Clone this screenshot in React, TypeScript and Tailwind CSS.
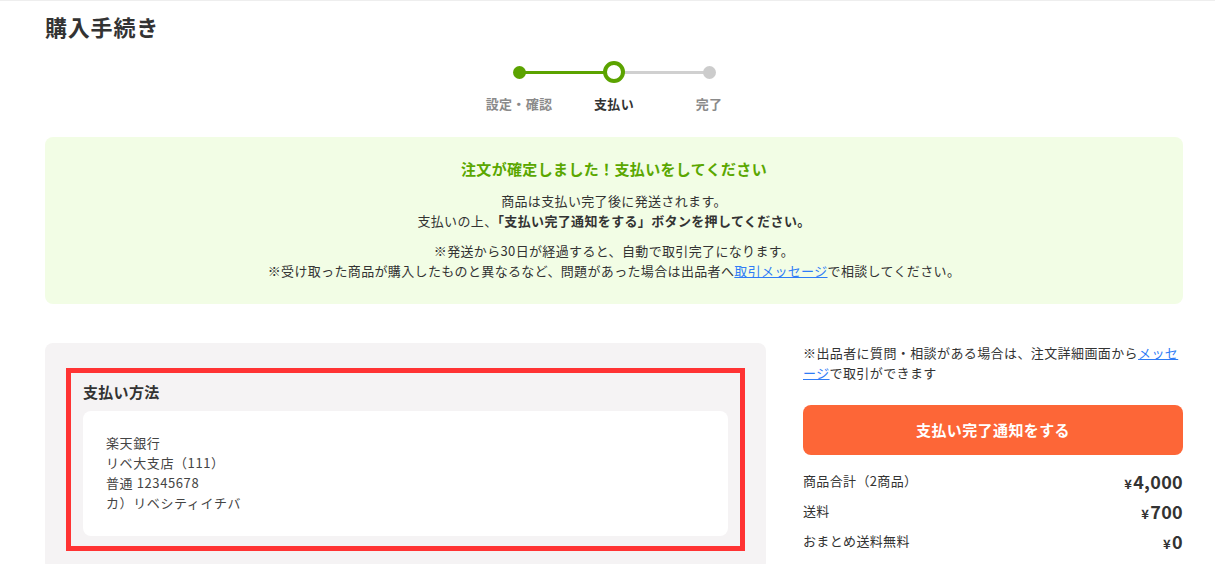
import React from 'react';

const font = { fontFamily: '"Noto Sans CJK JP", "Noto Sans", sans-serif' };

function Stepper() {
    const steps = [
        { label: '設定・確認', state: 'done' },
        { label: '支払い', state: 'current' },
        { label: '完了', state: 'todo' },
    ];
    return (
        <div className="flex flex-col items-center mt-[19px]">
            <div className="relative grid grid-cols-3 w-[285px] h-[22px]">
                {/* connecting lines */}
                <div className="absolute top-[10px] left-[47px] w-[96px] h-[3px] bg-[#5ba300]" />
                <div className="absolute top-[10px] left-[143px] w-[95px] h-[3px] bg-[#d0d0d0]" />
                {steps.map((s) => (
                    <div key={s.label} className="relative flex items-center justify-center">
                        {s.state === 'done' && <span className="w-[13px] h-[13px] rounded-full bg-[#5ba300]" />}
                        {s.state === 'current' && <span className="w-[22px] h-[22px] rounded-full border-[4px] border-[#5ba300] bg-white" />}
                        {s.state === 'todo' && <span className="w-[13px] h-[13px] rounded-full bg-[#cccccc]" />}
                    </div>
                ))}
            </div>
            <div className="grid grid-cols-3 w-[285px] mt-[11px]">
                {steps.map((s) => (
                    <div
                        key={s.label}
                        className={`text-center text-[13px] leading-[20px] font-bold whitespace-nowrap tracking-[0.3px] ${s.state === 'current' ? 'text-[#333333]' : 'text-[#8a8a8a]'}`}
                    >
                        {s.label}
                    </div>
                ))}
            </div>
        </div>
    );
}

function Row({ label, value }: { label: string; value: string }) {
    return (
        <div className="flex h-[30px] items-center justify-between">
            <span className="text-[13px] text-[#333333] tracking-[0.35px]">{label}</span>
            <span className="text-[18px] font-bold text-[#333333] tracking-[0.3px]">
                <span className="text-[13px] mr-[1px]">¥</span>
                {value}
            </span>
        </div>
    );
}

export default function App() {
    return (
        <div className="min-h-screen bg-white border-t border-[#eeeeee] text-[#333333]" style={font}>
            <div className="w-[1138px] ml-[45px]">
                <h1 className="pt-[9px] text-[22px] leading-[32px] font-bold text-[#333333] tracking-[0.8px]">購入手続き</h1>

                <Stepper />

                {/* confirmation notice */}
                <div className="mt-[23px] rounded-[8px] bg-[#f2fde5] pt-[21px] pb-[23px] text-center tracking-[0.35px]">
                    <p className="text-[15px] leading-[22px] font-bold text-[#5aa700]">
                        注文が確定しました！支払いをしてください
                    </p>
                    <div className="mt-[11px] text-[13px] leading-[20px] text-[#333333]">
                        <p>商品は支払い完了後に発送されます。</p>
                        <p>
                            支払いの上、<span className="font-bold">「支払い完了通知をする」ボタンを押してください。</span>
                        </p>
                    </div>
                    <div className="mt-[10px] text-[13px] leading-[20px] text-[#333333]">
                        <p>※発送から30日が経過すると、自動で取引完了になります。</p>
                        <p>
                            ※受け取った商品が購入したものと異なるなど、問題があった場合は出品者へ
                            <a className="text-[#2f7cf6] underline">取引メッセージ</a>で相談してください。
                        </p>
                    </div>
                </div>

                <div className="mt-[39px] flex gap-[37px] items-start">
                    {/* payment method */}
                    <div className="w-[721px] rounded-[8px] bg-[#f5f3f4] px-[21px] pt-[25px] pb-[20px]">
                        <div className="border-[5px] border-[#ff3333] px-[12px] pt-[9px] pb-[10px]">
                            <h2 className="text-[15px] leading-[20px] font-bold text-[#333333] tracking-[0.3px]">支払い方法</h2>
                            <div className="mt-[9px] rounded-[8px] bg-white pl-[23px] pt-[22px] pb-[23px] text-[13px] leading-[20px] text-[#444444] tracking-[0.6px]">
                                <p>楽天銀行</p>
                                <p>リベ大支店（111）</p>
                                <p>普通 12345678</p>
                                <p>カ）リベシティイチバ</p>
                            </div>
                        </div>
                    </div>

                    {/* summary */}
                    <div className="w-[380px]">
                        <p className="text-[13px] leading-[20px] text-[#333333] tracking-[0.4px]">
                            ※出品者に質問・相談がある場合は、注文詳細画面から<a className="text-[#2f7cf6] underline">メッセージ</a>で取引ができます
                        </p>
                        <button className="mt-[22px] w-full h-[50px] rounded-[8px] bg-[#fd6637] text-white text-[15px] font-bold tracking-[0.4px]">
                            支払い完了通知をする
                        </button>
                        <div className="mt-[11px]">
                            <Row label="商品合計（2商品）" value="4,000" />
                            <Row label="送料" value="700" />
                            <Row label="おまとめ送料無料" value="0" />
                        </div>
                    </div>
                </div>
            </div>
        </div>
    );
}
